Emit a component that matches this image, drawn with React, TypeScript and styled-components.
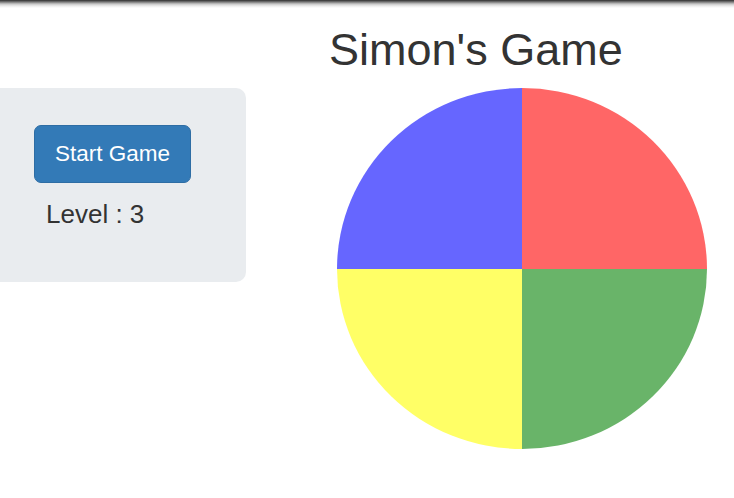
import styled, { createGlobalStyle } from "styled-components";

const Global = createGlobalStyle`
    body { margin:0; background:#fff; font-family:"Liberation Sans", Arial, sans-serif; color:#333; }
`;

const TopShadow = styled.div`
    height:8px;
    background: linear-gradient(to bottom, #2e2e2e 0, #7a7a7a 2px, #c8c8c8 4px, #ececec 6px, #fff 8px);
`;

const Page = styled.div`
    display:flex;
    align-items:flex-start;
`;

const Panel = styled.div`
    margin-top:80px;
    width:246px;
    height:194px;
    box-sizing:border-box;
    padding:37px 0 0 34px;
    background:#e9ecef;
    border-radius:0 10px 10px 0;
    display:flex;
    flex-direction:column;
    align-items:flex-start;
`;

const StartBtn = styled.button`
    width:157px;
    height:58px;
    background:#337ab7;
    border:1px solid #2e6da4;
    border-radius:7px;
    color:#fff;
    font-family:"Liberation Sans", Arial, sans-serif;
    font-size:22.5px;
    padding:0;
    cursor:pointer;
`;

const Level = styled.div`
    margin:16px 0 0 12px;
    font-size:26px;
    line-height:30px;
`;

const Board = styled.div`
    margin-left:83px;
    display:flex;
    flex-direction:column;
`;

const Title = styled.h1`
    margin:17px 0 0;
    font-size:45px;
    font-weight:400;
    line-height:50px;
`;

const Circle = styled.div`
    margin:13px 0 0 8px;
    display:grid;
    grid-template-columns:185px 185px;
    grid-template-rows:181px 180px;
`;

const corners: Record<string, string> = {
    tl: "border-top-left-radius:100% 100%;",
    tr: "border-top-right-radius:100% 100%;",
    bl: "border-bottom-left-radius:100% 100%;",
    br: "border-bottom-right-radius:100% 100%;",
};

const Pad = styled.div<{ $color: string; $corner: string }>`
    background:${p => p.$color};
    ${p => corners[p.$corner]}
    cursor:pointer;
`;

export default function App() {
    return (
        <>
            <Global />
            <TopShadow />
            <Page>
                <Panel>
                    <StartBtn>Start Game</StartBtn>
                    <Level>Level : 3</Level>
                </Panel>
                <Board>
                    <Title>Simon's Game</Title>
                    <Circle>
                        <Pad $color="#6666ff" $corner="tl" />
                        <Pad $color="#ff6666" $corner="tr" />
                        <Pad $color="#ffff66" $corner="bl" />
                        <Pad $color="#69b469" $corner="br" />
                    </Circle>
                </Board>
            </Page>
        </>
    );
}
